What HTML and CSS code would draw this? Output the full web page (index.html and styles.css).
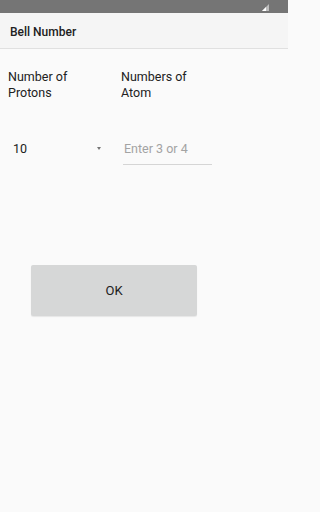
FILE: index.html
```html
<!DOCTYPE html>
<html>
<head>
<meta charset="utf-8">
<link rel="stylesheet" href="styles.css">
</head>
<body>
<div class="page">
<div class="status">
  <svg class="signal" width="8" height="8" viewBox="0 0 8 8"><polygon points="7,0 7,7 0,7" fill="#bdbdbd"/><polygon points="4,3 4,7 0,7" fill="#ffffff"/></svg>
</div>
<div class="appbar"><span class="title">Bell Number</span></div>
<main class="content">
  <div class="labels">
    <div class="label">Number of<br>Protons</div>
    <div class="label label2">Numbers of<br>Atom</div>
  </div>
  <div class="inputs">
    <div class="spinner"><span class="val">10</span><span class="arrow"></span></div>
    <div class="field"><span class="hint">Enter 3 or 4</span></div>
  </div>
  <div class="btnrow"><div class="btn">OK</div></div>
</main>
</div>
</body>
</html>
```

FILE: styles.css
```css
html, body { margin: 0; padding: 0; }
body {
  background: #fafafa;
  font-family: Roboto, "Noto Sans", sans-serif; color: #212121;
  overflow: hidden;
}
.page { width: 288px; min-height: 512px; }
.status {
  height: 13px; background: #757575;
  display: flex; justify-content: flex-end; align-items: flex-start;
  padding-right: 18px;
}
.signal { margin-top: 4px; }
.appbar {
  background: #f5f5f5; border-bottom: 1px solid #e0e0e0;
  display: flex; align-items: center; padding-left: 10px;
  box-sizing: border-box; height: 36px;
}
.title { font-size: 12px; font-weight: 500; color: #212121; margin-top: 2px; }
.labels { display: flex; padding-left: 8px; padding-top: 20px; }
.label { font-size: 12.5px; line-height: 16px; color: #212121; width: 113px; }
.label2 { width: auto; }
.inputs { display: flex; margin-top: 34px; align-items: flex-start; }
.spinner {
  width: 110px; display: flex; align-items: center; justify-content: space-between;
  padding-left: 13px; box-sizing: border-box; padding-right: 9px; height: 26px;
}
.val { font-size: 12.5px; color: #212121; }
.arrow {
  width: 0; height: 0; border-left: 2.5px solid transparent; border-right: 2.5px solid transparent;
  border-top: 3px solid #757575; margin-top: 0;
}
.field {
  margin-left: 13px; width: 89px; height: 30px; box-sizing: border-box;
  border-bottom: 1.5px solid #d5d5d5; padding-left: 1px; padding-top: 3px;
}
.hint { font-size: 12.5px; color: #a3a3a3; }
.btnrow { padding-left: 31px; margin-top: 100px; }
.btn {
  width: 166px; height: 51px; background: #d6d7d7; border-radius: 2px;
  display: flex; align-items: center; justify-content: center;
  font-size: 13px; color: #212121; box-shadow: 0 1px 1px rgba(0,0,0,0.08);
}
```
